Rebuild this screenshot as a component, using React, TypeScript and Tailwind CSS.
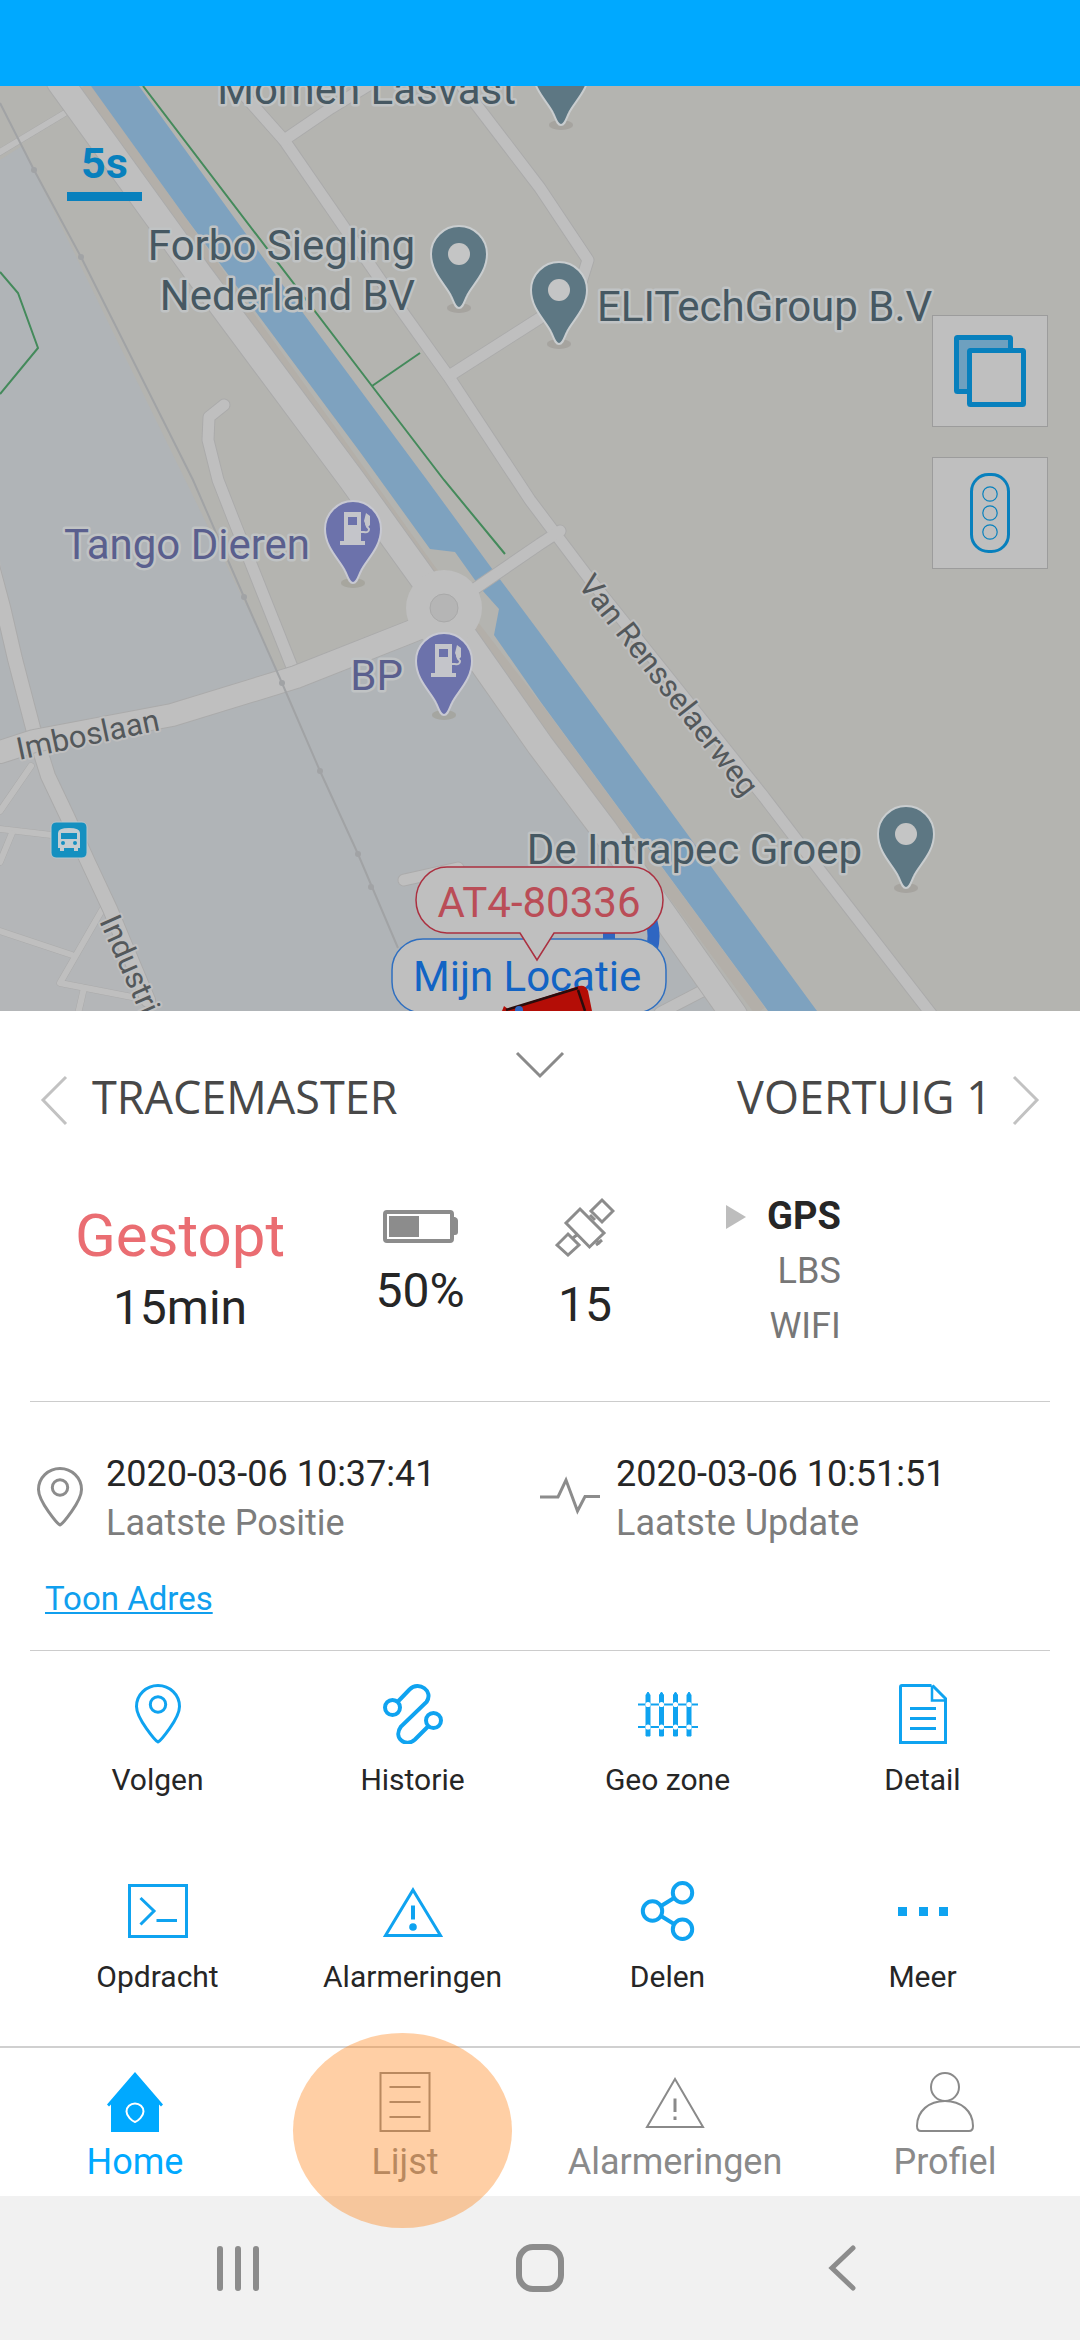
import type { ReactNode } from "react";

type IconProps = { className?: string };

/* ---------- map drawing ---------- */

const PIN = "M0 54 C-4 54 -5 48 -8 42 C-13 31 -28 19 -28 0 A28 28 0 0 1 28 0 C28 19 13 31 8 42 C5 48 4 54 0 54Z";

function PlacePin({ x, y }: { x: number; y: number }) {
  return (
    <g transform={`translate(${x} ${y})`}>
      <ellipse cx="0" cy="54" rx="12" ry="5" fill="#9f9d99" opacity="0.7" />
      <path d={PIN} fill="#5d7783" stroke="#c9cdcf" strokeWidth="2" />
      <circle r="11" fill="#c4c5c5" />
    </g>
  );
}

function FuelPin({ x, y }: { x: number; y: number }) {
  return (
    <g transform={`translate(${x} ${y})`}>
      <ellipse cx="0" cy="54" rx="12" ry="5" fill="#a19f97" opacity="0.7" />
      <path d={PIN} fill="#6c72ab" stroke="#c8c9d2" strokeWidth="2" />
      <path fillRule="evenodd" fill="#c4c5ca" d="M-9 -17 H8 V12 H12 V16 H-13 V12 H-9Z M-5 -12 V-4 H4 V-12Z" />
      <path d="M8 3 H11 Q16 4 16 0 Q11 -4 14 -11" fill="none" stroke="#c4c5ca" strokeWidth="2" />
      <path d="M13 -16 L17 -13 V-4 L14 -1 L11 -8Z" fill="#c4c5ca" />
    </g>
  );
}

const minorRoads = [
  "M0 152 L65 113",
  "M31 766 L0 811",
  "M0 829 L60 836",
  "M12 833 L0 862",
  "M0 931 L72 955",
  "M102 910 L60 983 L132 997",
  "M84 988 L78 1014",
];

const streets = [
  "M236 86 L284 140 L399 307 L449 377 L530 500 L588 577 L764 797 L822 873 L932 1015",
  "M284 140 L331 108 L400 66",
  "M449 376 L540 318 L578 292 L588 260 L540 188 L462 86",
  "M470 592 L540 544 L560 531",
  "M224 405 L209 417 L208 440 L218 480 L234 521 L294 672",
  "M404 880 L458 868",
  "M660 1013 L708 988",
];

const mainRoads = ["M60 82 L198 273 L352 480 L444 608 L540 745 L604 830 L734 1015"];
const crossRoads = ["M444 618 L410 632 L296 677 L172 715 L34 741 L0 752"];
const leftRoad = "M-8 566 L3 607 L15 659 L33 728 L48 776 L67 816 L88 862 L110 909 L148 1000";

function Roads({ paths, width, edge }: { paths: string[]; width: number; edge: number }) {
  return (
    <g fill="none" strokeLinejoin="round" strokeLinecap="round">
      {paths.map((d) => (
        <path key={`e${d}`} d={d} stroke="#ababab" strokeWidth={edge} />
      ))}
      {paths.map((d) => (
        <path key={d} d={d} stroke="#bfbfbf" strokeWidth={width} />
      ))}
    </g>
  );
}

function MapCanvas() {
  return (
    <svg
      viewBox="0 86 1080 925"
      preserveAspectRatio="xMidYMin slice"
      className="absolute inset-0 h-full w-full"
      fontFamily="Roboto, sans-serif"
      role="img"
      aria-label="Kaart"
    >
      <rect x="0" y="86" width="1080" height="925" fill="#b4b4b0" />
      <path d="M0 160 L22 146 L195 500 L284 684 L410 638 L444 630 L470 655 L714 1011 H0Z" fill="#b0b4b7" />
      <path d="M0 560 L30 720 L34 760 L110 909 L150 1011 H0Z" fill="#b4b6b8" />
      <path d="M0 600 V740 L34 735Z" fill="#b0b4b7" />
      <path d="M84 86 L430 570 L540 712 L760 1011" fill="none" stroke="#b3afa9" strokeWidth="12" />

      <path
        d="M91 86 L186 218 L360 452 L430 549 L455 552 L482 590 L499 609 L494 635 L540 701 L640 837 L768 1011 H817 L688 835 L540 633 L490 566 L427 480 L306 317 L139 86Z"
        fill="#7ea2bf"
      />

      <g fill="none" stroke="#448a5b" strokeWidth="2">
        <path d="M143 86 L372 386 L444 480 L505 554" />
        <path d="M372 386 L420 353" />
        <path d="M0 272 L18 293 L38 348 L0 394" />
      </g>

      <Roads paths={minorRoads} width={6} edge={7} />
      <Roads paths={streets} width={11} edge={13} />
      <Roads paths={[leftRoad]} width={14} edge={16} />
      <Roads paths={crossRoads} width={22} edge={24} />
      <Roads paths={mainRoads} width={26} edge={28} />
      <circle cx="444" cy="608" r="38" fill="#bfbfbf" />
      <circle cx="444" cy="608" r="14" fill="#b5b5b5" stroke="#a9a9a9" />

      <g fill="none" stroke="#a1a3a5" strokeWidth="2">
        <path d="M0 103 L34 170 L81 257 L193 480 L244 597 L282 683 L320 771 L358 854 L398 948" />
      </g>
      <g fill="#a1a3a5">
        {[
          [34, 170],
          [81, 257],
          [244, 597],
          [282, 683],
          [320, 771],
          [358, 854],
          [371, 887],
        ].map(([cx, cy]) => (
          <circle key={cy} cx={cx} cy={cy} r="3" />
        ))}
      </g>

      <PlacePin x={561} y={71} />
      <PlacePin x={459} y={254} />
      <PlacePin x={559} y={290} />
      <PlacePin x={906} y={834} />
      <FuelPin x={353} y={529} />
      <FuelPin x={444} y={661} />

      <g fontSize="42" fill="#465862" stroke="#c0c3c4" strokeWidth="5" strokeLinejoin="round" paintOrder="stroke">
        <text x="516" y="104" textAnchor="end">Momen Lasvast</text>
        <text x="415" y="260" textAnchor="end">Forbo Siegling</text>
        <text x="415" y="310" textAnchor="end">Nederland BV</text>
        <text x="597" y="321">ELITechGroup B.V</text>
        <text x="862" y="864" textAnchor="end">De Intrapec Groep</text>
        <g fill="#5a5f8e">
          <text x="310" y="559" textAnchor="end">Tango Dieren</text>
          <text x="403" y="690" textAnchor="end">BP</text>
        </g>
      </g>
      <g fontSize="31" fill="#53585b" stroke="#bfbfbf" strokeWidth="4" strokeLinejoin="round" paintOrder="stroke">
        <text transform="translate(19 760) rotate(-12)">Imboslaan</text>
        <text transform="translate(99 921) rotate(66)">Industri</text>
        <text transform="translate(577 585) rotate(52)">Van Rensselaerweg</text>
      </g>

      <g>
        <rect x="51" y="822" width="36" height="36" rx="5" fill="#1590c0" stroke="#b9c6cc" />
        <path
          fillRule="evenodd"
          fill="#c4cdd1"
          d="M58 833 Q58 828 69 828 Q80 828 80 833 V848 H78 V851 H74 V848 H64 V851 H60 V848 H58Z M61 833 V839 H77 V833Z M61 843 a2 2 0 1 0 4 0 a2 2 0 1 0 -4 0Z M73 843 a2 2 0 1 0 4 0 a2 2 0 1 0 -4 0Z"
        />
      </g>

      {/* own position and tracker markers with their captions */}
      <path d="M645 908 A50 50 0 0 1 645 964" fill="none" stroke="#2f66c2" strokeWidth="12" />
      <rect x="603" y="930" width="12" height="14" fill="#2f66c2" />
      <rect x="392" y="939" width="274" height="74" rx="31" fill="#bfbfbf" stroke="#2f6fc0" strokeWidth="1.5" />
      <text x="413" y="991" fontSize="42" fill="#1264c4">Mijn Locatie</text>
      <path
        d="M447 867 H632 A31 33 0 0 1 632 933 H554 L537 960 L520 933 H447 A31 33 0 0 1 447 867Z"
        fill="#bfbfbf"
        stroke="#ab3040"
        strokeWidth="1.5"
      />
      <text x="539" y="917" fontSize="42" textAnchor="middle" fill="#ba4d57">AT4-80336</text>
      <path d="M502 1011 L504 1006 L508 1009 L576 987 Q585 983 588 991 L592 1011Z" fill="#b40d06" />
      <path d="M506 1010 L578 988 M578 990 L585 1011" fill="none" stroke="#2a0c0c" strokeWidth="2.5" />
      <circle cx="519" cy="1010" r="4" fill="#2f66c2" />
    </svg>
  );
}

/* ---------- icons ---------- */

function Svg({ children, className = "", sw = 3 }: { children: ReactNode; className?: string; sw?: number }) {
  return (
    <svg
      viewBox="0 0 60 60"
      className={`h-[60px] w-[60px] shrink-0 ${className}`}
      fill="none"
      stroke="currentColor"
      strokeWidth={sw}
      aria-hidden="true"
    >
      {children}
    </svg>
  );
}

const PinIcon = ({ className }: IconProps) => (
  <Svg className={className}>
    <path strokeLinejoin="round" d="M30 58 C28 57 8.500 35 8.500 22.500 A21.500 21 0 0 1 51.500 22.500 C51.500 35 32 57 30 58Z" />
    <circle cx="30" cy="20.500" r="7.700" />
  </Svg>
);

const PulseIcon = ({ className }: IconProps) => (
  <Svg className={className}>
    <path d="M0 30 H18 L26 13 L37.500 44 L45 29.500 H60" />
  </Svg>
);

const RouteIcon = () => (
  <Svg sw={4}>
    <circle cx="9.500" cy="23.500" r="7.500" />
    <circle cx="50.500" cy="36.500" r="7.500" />
    <path d="M15 17.500 L26.500 5.500 C36 -3.500 51 7 43.500 18 L18 42.500 C9.500 54 23 64 32 55.500 L45 42.500" />
  </Svg>
);

const FenceIcon = () => (
  <Svg sw={2}>
    <path d="M0 20.500 H60 M0 43 H60" />
    {[10, 23.5, 37.5, 51].map((x) => (
      <g key={x}>
        <path d={`M${x - 2} 52 V11 L${x} 8 L${x + 2} 11 V52Z`} fill="currentColor" stroke="currentColor" strokeWidth="1" />
        <circle cx={x} cy="20.500" r="2.600" fill="#ffffff" stroke="none" />
        <circle cx={x} cy="43" r="2.600" fill="#ffffff" stroke="none" />
      </g>
    ))}
  </Svg>
);

const DocumentIcon = () => (
  <Svg>
    <path d="M38.500 1.500 H9 Q7.500 1.500 7.500 3 V58.500 H52.500 V14.500 L39.500 1.500" />
    <path strokeWidth="2.500" d="M39 1.500 V16.500 H52.500" />
    <path d="M17 24.500 H43 M17 34.500 H43 M17 44.500 H43" />
  </Svg>
);

const TerminalIcon = () => (
  <Svg>
    <rect x="1.500" y="4.500" width="57" height="51" />
    <path d="M12.500 17 L26 30 L12.500 43.500 M28.500 39.500 H49" />
  </Svg>
);

const AlertIcon = () => (
  <Svg>
    <path d="M30 9 L57.500 54.500 H2.500Z" />
    <path strokeWidth="4" d="M30 24.500 V38.500" />
    <circle cx="30" cy="46" r="3.800" fill="currentColor" stroke="none" />
  </Svg>
);

const ShareIcon = () => (
  <Svg sw={4}>
    <circle cx="14.500" cy="30" r="9.700" />
    <circle cx="44.500" cy="11.700" r="9.700" />
    <circle cx="44.500" cy="48.300" r="9.700" />
    <path d="M23 25 L36 17 M23 35 L36 43" />
  </Svg>
);

const MoreIcon = () => (
  <Svg>
    <path d="M5 26 h9 v9 h-9Z M26 26 h9 v9 h-9Z M46 26 h9 v9 h-9Z" fill="currentColor" stroke="none" />
  </Svg>
);

const HomeIcon = () => (
  <Svg>
    <path d="M30 0 L58 32.500 L56 34.500 L54 32.500 V60 H6 V32.500 L4 34.500 L2 32.500Z" fill="currentColor" stroke="none" />
    <path stroke="#ffffff" strokeWidth="2" d="M30 50 C27 49 21.500 44 21.500 39.500 A8.500 8 0 0 1 38.500 39.500 C38.500 44 33 49 30 50Z" />
  </Svg>
);

const ListIcon = () => (
  <Svg sw={2}>
    <rect x="5.500" y="1" width="49" height="58" />
    <path d="M14.500 15 H45.500 M14.500 30 H45.500 M14.500 45 H45.500" />
  </Svg>
);

const AlertThinIcon = () => (
  <Svg sw={2}>
    <path d="M30 7 L58 55 H2Z" />
    <path strokeWidth="3" d="M30 26.500 V40 M30 44.500 V48" />
  </Svg>
);

const PersonIcon = () => (
  <Svg sw={2}>
    <circle cx="30" cy="15" r="14" />
    <path d="M30 29 C46 29 58 39 58 54 Q58 59 54 59 H6 Q2 59 2 54 C2 39 14 29 30 29Z" />
  </Svg>
);

const SatelliteIcon = () => (
  <Svg className="text-[#8c8c8c]">
    <path d="M25 12 L49 36 L34.500 50 L11 26Z" />
    <path d="M47 3 L58 14 L47 25 L36 14Z" />
    <path d="M13 37 L24 48 L13 58 L2 48Z" />
    <path d="M35 18 L40 23 M18 41 L23 37 M42 44 L45 47 M41 48 L47 43" />
  </Svg>
);

const BatteryIcon = () => (
  <svg viewBox="0 0 75 33" className="h-[33px] w-[75px]" aria-hidden="true">
    <rect x="2" y="2" width="67" height="29" rx="2" fill="none" stroke="#8c8c8c" strokeWidth="4" />
    <rect x="6" y="6" width="30" height="21" fill="#8c8c8c" />
    <path d="M69 7 H72 Q75 8 75 11 V22 Q75 25 72 25 H69Z" fill="#8c8c8c" />
  </svg>
);

/* ---------- data ---------- */

const actions = [
  { label: "Volgen", icon: <PinIcon /> },
  { label: "Historie", icon: <RouteIcon /> },
  { label: "Geo zone", icon: <FenceIcon /> },
  { label: "Detail", icon: <DocumentIcon /> },
  { label: "Opdracht", icon: <TerminalIcon /> },
  { label: "Alarmeringen", icon: <AlertIcon /> },
  { label: "Delen", icon: <ShareIcon /> },
  { label: "Meer", icon: <MoreIcon /> },
];

const tabs = [
  { label: "Home", icon: <HomeIcon />, active: true, marked: false },
  { label: "Lijst", icon: <ListIcon />, active: false, marked: true },
  { label: "Alarmeringen", icon: <AlertThinIcon />, active: false, marked: false },
  { label: "Profiel", icon: <PersonIcon />, active: false, marked: false },
];

const stamps = [
  { time: "2020-03-06 10:37:41", label: "Laatste Positie", icon: <PinIcon className="mb-1 text-[#8c8c8c]" /> },
  { time: "2020-03-06 10:51:51", label: "Laatste Update", icon: <PulseIcon className="mb-1 text-[#8c8c8c]" /> },
];

/* ---------- page ---------- */

export default function App() {
  return (
    <div className="flex min-h-screen flex-col bg-white font-[Roboto,sans-serif] text-[#262626]">
      <header className="h-[86px] shrink-0 bg-[#00a9ff]" />

      <section className="relative min-h-[600px] flex-1 overflow-hidden bg-[#b4b4b0]">
        <MapCanvas />
        <div className="absolute top-[54px] left-[67px] w-[75px] border-b-[9px] border-[#0880bd] pb-[5px] text-center text-[43px] leading-[47px] font-bold text-[#0880bd]">
          5s
        </div>
        <div className="absolute top-[229px] right-[32px] flex flex-col gap-[30px]">
          <button
            type="button"
            aria-label="Kaartlagen"
            className="flex h-[112px] w-[116px] items-center justify-center border border-[#9c9c9c] bg-[#bfbfbf]"
          >
            <svg viewBox="0 0 72 72" className="h-[72px] w-[72px]" aria-hidden="true">
              <rect x="2.500" y="2.500" width="54" height="54" rx="1" fill="#6ea0bf" stroke="#0880bd" strokeWidth="5" />
              <rect x="15.500" y="15.500" width="54" height="54" rx="1" fill="#bfbfbf" stroke="#0880bd" strokeWidth="5" />
            </svg>
          </button>
          <button
            type="button"
            aria-label="Verkeer"
            className="flex h-[112px] w-[116px] items-center justify-center border border-[#9c9c9c] bg-[#bfbfbf]"
          >
            <svg viewBox="0 0 40 80" className="h-[80px] w-[40px]" fill="none" stroke="#0880bd" aria-hidden="true">
              <rect x="1.500" y="1.500" width="37" height="77" rx="17" strokeWidth="3" />
              <circle cx="20" cy="21" r="7.200" strokeWidth="1.200" />
              <circle cx="20" cy="40" r="7.200" strokeWidth="1.200" />
              <circle cx="20" cy="59" r="7.200" strokeWidth="1.200" />
            </svg>
          </button>
        </div>
      </section>

      <main className="shrink-0 bg-white">
        <div className="grid grid-cols-[1fr_auto_1fr] items-start px-10 pt-10 font-['Open_Sans',sans-serif] text-[45px] leading-[60px] text-[#484848]">
          <button type="button" className="mt-4 flex items-center gap-6 justify-self-start">
            <svg viewBox="0 0 28 60" className="h-[60px] w-[28px]" fill="none" stroke="#c2c2c2" strokeWidth="3" aria-hidden="true">
              <path d="M26 10 L3 33 L26 57" />
            </svg>
            TRACEMASTER
          </button>
          <button type="button" aria-label="Paneel sluiten">
            <svg viewBox="0 0 50 28" className="h-[28px] w-[50px]" fill="none" stroke="#8a8a8a" strokeWidth="3" aria-hidden="true">
              <path d="M2 2 L25 25 L48 2" />
            </svg>
          </button>
          <button type="button" className="mt-4 flex items-center gap-5 justify-self-end">
            VOERTUIG 1
            <svg viewBox="0 0 28 60" className="h-[60px] w-[28px]" fill="none" stroke="#c2c2c2" strokeWidth="3" aria-hidden="true">
              <path d="M2 10 L25 33 L2 57" />
            </svg>
          </button>
        </div>

        <div className="mx-[30px] grid grid-cols-[8fr_8fr_3fr_13fr] items-center border-b border-[#cccccc] px-[30px] pt-[62px] pb-[47px] text-[48px] leading-[72px]">
          <div className="text-center">
            <p className="text-[60px] text-[#ea6d72]">Gestopt</p>
            <p>15min</p>
          </div>
          <div className="flex flex-col items-center gap-3 pb-1.5">
            <BatteryIcon />
            <p>50%</p>
          </div>
          <div className="flex flex-col items-center gap-3 pb-1.5">
            <SatelliteIcon />
            <p>15</p>
          </div>
          <ul className="ml-24 flex flex-col justify-self-start text-right text-[36px] leading-[55px] text-[#777777]">
            <li className="flex items-center justify-end gap-[21px] text-[38px] font-bold text-[#262626]">
              <svg viewBox="0 0 20 24" className="h-[24px] w-[20px]" aria-hidden="true">
                <path d="M0 0 L20 12 L0 24Z" fill="#bdbdbd" />
              </svg>
              GPS
            </li>
            <li>LBS</li>
            <li>WIFI</li>
          </ul>
        </div>

        <div className="mx-[30px] border-b border-[#cccccc] pt-12 pb-[27px]">
          <div className="grid grid-cols-2">
            {stamps.map((s) => (
              <div key={s.label} className="flex items-center gap-4 text-[36px] leading-[49px]">
                {s.icon}
                <div>
                  <p>{s.time}</p>
                  <p className="text-[#7d7d7d]">{s.label}</p>
                </div>
              </div>
            ))}
          </div>
          <a
            href="#adres"
            className="mt-[27px] ml-[15px] inline-block text-[33px] leading-[48px] text-[#109fee] underline decoration-2 underline-offset-2"
          >
            Toon Adres
          </a>
        </div>

        <div className="mx-[30px] grid grid-cols-4 gap-y-[81px] pt-[33px] pb-[49px]">
          {actions.map((a) => (
            <button key={a.label} type="button" className="flex flex-col items-center gap-4 text-[30px] leading-10">
              <span className="text-[#0fa3f0]">{a.icon}</span>
              {a.label}
            </button>
          ))}
        </div>
      </main>

      <nav className="grid shrink-0 grid-cols-4 border-t-2 border-[#d0d0d0] bg-white">
        {tabs.map((t) => (
          <button
            key={t.label}
            type="button"
            className={`relative flex flex-col items-center gap-2 pt-6 pb-3 text-[36px] leading-[44px] ${
              t.active ? "text-[#00a9ff]" : "text-[#8a8a8a]"
            }`}
          >
            {t.icon}
            {t.label}
            {t.marked && (
              <span className="pointer-events-none absolute -top-[15px] left-[23px] z-10 h-[195px] w-[219px] rounded-[50%] bg-[#ff871e]/40" />
            )}
          </button>
        ))}
      </nav>

      <footer className="flex h-[144px] shrink-0 items-center justify-center gap-[254px] bg-[#f1f1f1] text-[#8c8c8c]">
        <button type="button" aria-label="Recente apps">
          <svg viewBox="0 0 48 48" className="h-[48px] w-[48px]" fill="none" stroke="currentColor" strokeWidth="6" strokeLinecap="round" aria-hidden="true">
            <path d="M6 5 V44 M24 5 V44 M42 5 V44" />
          </svg>
        </button>
        <button type="button" aria-label="Startscherm">
          <svg viewBox="0 0 48 48" className="h-[48px] w-[48px]" fill="none" stroke="currentColor" strokeWidth="6" aria-hidden="true">
            <rect x="3" y="3" width="42" height="42" rx="14" />
          </svg>
        </button>
        <button type="button" aria-label="Terug">
          <svg viewBox="0 0 48 48" className="h-[48px] w-[48px]" fill="none" stroke="currentColor" strokeWidth="5" strokeLinecap="round" aria-hidden="true">
            <path d="M35 4 L14 24 L35 44" />
          </svg>
        </button>
      </footer>
    </div>
  );
}
